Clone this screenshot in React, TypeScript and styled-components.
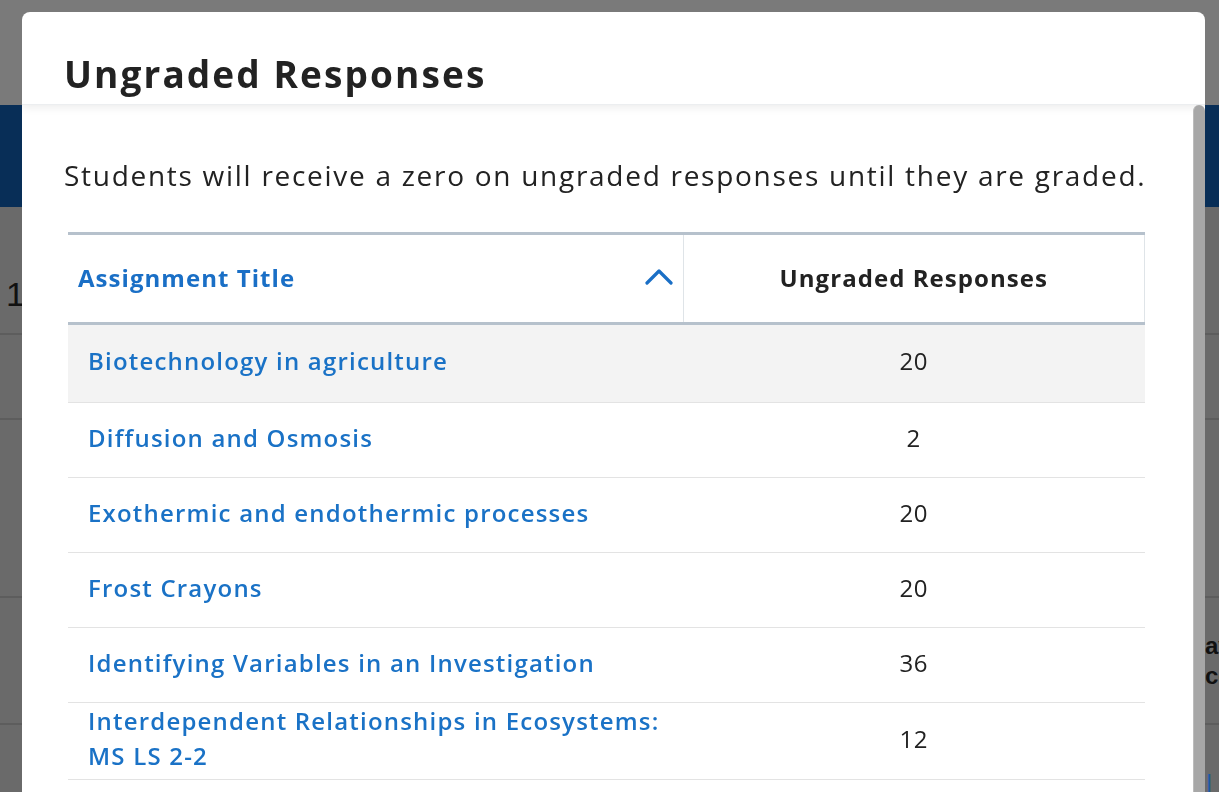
import * as React from "react";
import styled, { createGlobalStyle } from "styled-components";

const GlobalStyle = createGlobalStyle`
  html, body {
    margin: 0;
    padding: 0;
    height: 100%;
    overflow: hidden;
  }
  body {
    font-family: "Open Sans", "Noto Sans", sans-serif;
    color: #222;
  }
`;

type Assignment = { title: string; count: number };

const assignments: Assignment[] = [
  { title: "Biotechnology in agriculture", count: 20 },
  { title: "Diffusion and Osmosis", count: 2 },
  { title: "Exothermic and endothermic processes", count: 20 },
  { title: "Frost Crayons", count: 20 },
  { title: "Identifying Variables in an Investigation", count: 36 },
  { title: "Interdependent Relationships in Ecosystems: MS LS 2-2", count: 12 },
  { title: "Kinetic and Potential Energy", count: 8 },
  { title: "Photosynthesis and Respiration", count: 15 },
];

/* ---------- dimmed page behind the dialog ---------- */

const Page = styled.div`
  height: 100vh;
  background: #6a6a6a;
  display: flex;
  flex-direction: column;
`;

const TopBar = styled.div`
  height: 105px;
  background: #7a7a7a;
  flex: none;
`;

const NavBand = styled.div`
  height: 102px;
  background: #082e57;
  flex: none;
`;

const PageRow = styled.div<{ $h: number }>`
  height: ${(p) => p.$h}px;
  flex: none;
  border-bottom: 2px solid #5d5d5d;
  display: flex;
  align-items: center;
  box-sizing: border-box;
  font-family: "Liberation Sans", Arial, sans-serif;
  color: #111;
`;

const BigNumber = styled.span`
  font-size: 34px;
  padding-left: 6px;
  margin-top: 48px;
`;

const SideText = styled.div`
  padding-left: 1205px;
  font-size: 24px;
  font-weight: 700;
  line-height: 30px;
  white-space: nowrap;
`;

const SideLink = styled.span`
  padding-left: 1206px;
  color: #1a5aa8;
  font-size: 24px;
  white-space: nowrap;
  align-self: flex-end;
  padding-bottom: 6px;
`;

/* ---------- dialog ---------- */

const Dialog = styled.div`
  position: fixed;
  top: 12px;
  left: 22px;
  right: 14px;
  bottom: -120px;
  background: #fff;
  border-radius: 8px;
  display: flex;
  flex-direction: column;
  overflow: hidden;
`;

const DialogHeader = styled.div`
  height: 93px;
  flex: none;
  display: flex;
  align-items: center;
  padding: 0 42px;
  position: relative;
  z-index: 1;
  box-shadow: 0 3px 8px rgba(0, 0, 0, 0.07);
  border-bottom: 1px solid #eceef0;
  box-sizing: border-box;
`;

const Title = styled.h1`
  margin: 0;
  padding-top: 30px;
  font-size: 37px;
  font-weight: 700;
  color: #222;
  letter-spacing: 2.1px;
`;

const DialogBody = styled.div`
  flex: 1;
  overflow: hidden;
  padding: 50px 60px 40px 42px;
`;

const ScrollThumb = styled.div`
  position: absolute;
  top: 93px;
  right: 0;
  bottom: 0;
  width: 12px;
  box-sizing: border-box;
  background: #a7a7a7;
  border-left: 1px solid #bcbcbc;
  border-radius: 6px 6px 0 0;
  z-index: 2;
`;

const Note = styled.p`
  margin: 0 0 37px;
  font-size: 28px;
  line-height: 40px;
  letter-spacing: 1.72px;
  white-space: nowrap;
  color: #222;
`;

const Table = styled.table`
  width: calc(100% - 4px);
  margin-left: 4px;
  border-collapse: collapse;
  table-layout: fixed;
`;

const HeadCell = styled.th<{ $center?: boolean }>`
  height: 84px;
  border-top: 3px solid #b6c1cc;
  border-bottom: 3px solid #b6c1cc;
  padding: 0 10px 3px;
  font-size: 24px;
  font-weight: 700;
  letter-spacing: 1.05px;
  text-align: ${(p) => (p.$center ? "center" : "left")};
  color: ${(p) => (p.$center ? "#222" : "#1a6fc6")};
  ${(p) =>
    p.$center &&
    `border-left: 1px solid #dfe4e8; border-right: 1px solid #dfe4e8;`}
`;

const SortLabel = styled.div`
  display: flex;
  align-items: center;
  justify-content: space-between;
`;

const Row = styled.tr<{ $active?: boolean }>`
  background: ${(p) => (p.$active ? "#f3f3f3" : "#fff")};
  border-bottom: 1px solid #e3e3e3;
`;

const Cell = styled.td<{ $center?: boolean; $h?: number }>`
  height: ${(p) => p.$h ?? 68}px;
  padding: 0 20px 6px;
  font-size: 24px;
  line-height: 35px;
  font-weight: 500;
  letter-spacing: 0.6px;
  text-align: ${(p) => (p.$center ? "center" : "left")};
  color: #222;
`;

const TitleLink = styled.a`
  color: #1a72c6;
  text-decoration: none;
  font-weight: 600;
  letter-spacing: 1.2px;
  display: inline-block;
  max-width: 600px;
`;

const Chevron = () => (
  <svg width="28" height="18" viewBox="0 0 28 18" fill="none">
    <polyline
      points="2,15 14,3 26,15"
      stroke="#1a6fc6"
      strokeWidth="3.2"
      strokeLinecap="round"
      strokeLinejoin="round"
    />
  </svg>
);

export default function App() {
  return (
    <>
      <GlobalStyle />
      <Page>
        <TopBar />
        <NavBand />
        <PageRow $h={128}>
          <BigNumber>1</BigNumber>
        </PageRow>
        <PageRow $h={85} />
        <PageRow $h={178} />
        <PageRow $h={127}>
          <SideText>
            avg
            <br />
            comp
          </SideText>
        </PageRow>
        <PageRow $h={80}>
          <SideLink>|</SideLink>
        </PageRow>
      </Page>

      <Dialog role="dialog" aria-labelledby="dlg-title">
        <DialogHeader>
          <Title id="dlg-title">Ungraded Responses</Title>
        </DialogHeader>
        <DialogBody>
          <Note>
            Students will receive a zero on ungraded responses until they are
            graded.
          </Note>
          <Table>
            <colgroup>
              <col style={{ width: 615 }} />
              <col />
            </colgroup>
            <thead>
              <tr>
                <HeadCell>
                  <SortLabel>
                    <span>Assignment Title</span>
                    <Chevron />
                  </SortLabel>
                </HeadCell>
                <HeadCell $center>Ungraded Responses</HeadCell>
              </tr>
            </thead>
            <tbody>
              {assignments.map((a, i) => (
                <Row key={a.title} $active={i === 0}>
                  <Cell $h={i === 0 ? 71 : 68}>
                    <TitleLink href="#">{a.title}</TitleLink>
                  </Cell>
                  <Cell $center $h={i === 0 ? 71 : 68}>
                    {a.count}
                  </Cell>
                </Row>
              ))}
            </tbody>
          </Table>
        </DialogBody>
        <ScrollThumb />
      </Dialog>
    </>
  );
}
